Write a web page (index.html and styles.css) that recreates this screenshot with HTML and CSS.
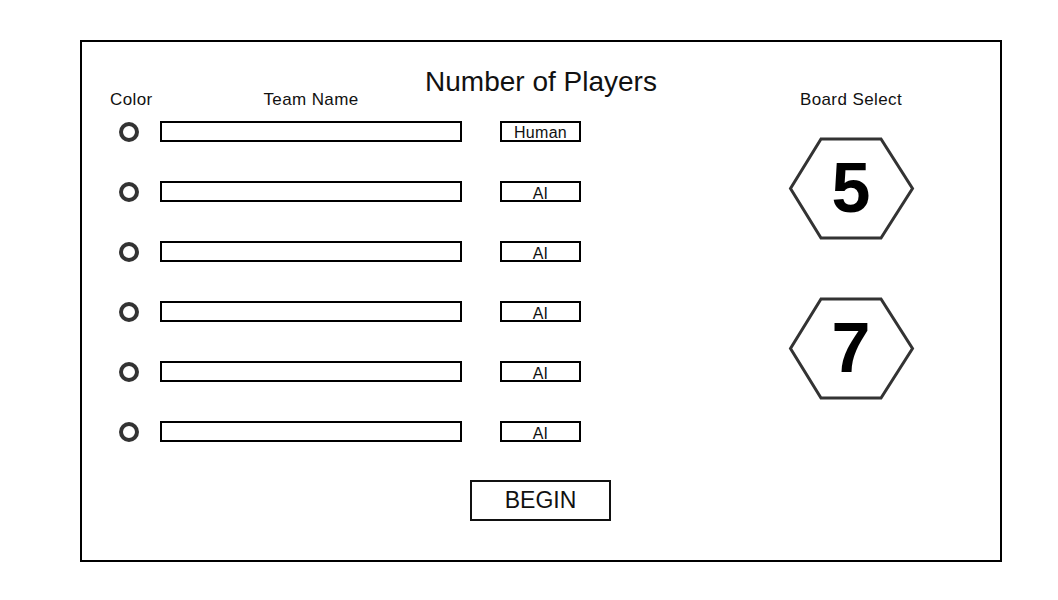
FILE: index.html
```html
<!DOCTYPE html>
<html lang="en">
<head>
    <meta charset="UTF-8">
    <meta name="viewport" content="width=device-width, initial-scale=1.0">
    <title>Game Setup</title>
    <link rel="stylesheet" href="styles.css">
</head>
<body>
    <div class="frame">
        <h1 class="title">Number of Players</h1>
        <div class="content">
            <div class="players">
                <div class="player-head">
                    <span class="label color-label">Color</span>
                    <span class="label name-label">Team Name</span>
                </div>
                <div class="player-list">
                    <div class="player-row">
                        <span class="swatch"></span>
                        <input class="team-name" type="text">
                        <span class="player-type">Human</span>
                    </div>
                    <div class="player-row">
                        <span class="swatch"></span>
                        <input class="team-name" type="text">
                        <span class="player-type ai">AI</span>
                    </div>
                    <div class="player-row">
                        <span class="swatch"></span>
                        <input class="team-name" type="text">
                        <span class="player-type ai">AI</span>
                    </div>
                    <div class="player-row">
                        <span class="swatch"></span>
                        <input class="team-name" type="text">
                        <span class="player-type ai">AI</span>
                    </div>
                    <div class="player-row">
                        <span class="swatch"></span>
                        <input class="team-name" type="text">
                        <span class="player-type ai">AI</span>
                    </div>
                    <div class="player-row">
                        <span class="swatch"></span>
                        <input class="team-name" type="text">
                        <span class="player-type ai">AI</span>
                    </div>
                </div>
                <div class="begin-row">
                    <button class="begin">BEGIN</button>
                </div>
            </div>
            <div class="board-select">
                <span class="label">Board Select</span>
                <button class="hex hex-first">
                    <svg width="128" height="106" viewBox="0 0 128 106">
                        <polygon points="34,3 94,3 125.5,52.5 94,102 34,102 3.5,52.5" />
                        <text x="64" y="76">5</text>
                    </svg>
                </button>
                <button class="hex">
                    <svg width="128" height="106" viewBox="0 0 128 106">
                        <polygon points="34,3 94,3 125.5,52.5 94,102 34,102 3.5,52.5" />
                        <text x="64" y="76">7</text>
                    </svg>
                </button>
            </div>
        </div>
    </div>
</body>
</html>
```

FILE: styles.css
```css
body {
    margin: 0;
    background-color: #fff;
    font-family: "Liberation Sans", Arial, sans-serif;
    color: #111;
}

.frame {
    box-sizing: border-box;
    width: 922px;
    height: 522px;
    margin: 40px 0 0 80px;
    padding-top: 28px;
    border: 2px solid #000;
}

.title {
    margin: 0 0 -4px;
    font-size: 28px;
    font-weight: normal;
    line-height: 24px;
    text-align: center;
}

.content {
    display: flex;
    align-items: flex-start;
}

.players {
    display: flex;
    flex-direction: column;
    padding-left: 28px;
}

.label {
    font-size: 17px;
    line-height: 20px;
    letter-spacing: 0.4px;
}

.player-head,
.player-row,
.begin-row {
    display: grid;
    grid-template-columns: 50px 340px 81px;
    align-items: center;
}

.name-label {
    width: 302px;
    text-align: center;
}

.player-list {
    display: flex;
    flex-direction: column;
    gap: 39px;
    margin-top: 10px;
}

.player-row {
    height: 21px;
}

.swatch {
    box-sizing: border-box;
    width: 20px;
    height: 20px;
    margin: 2px 0 0 9px;
    border: 4px solid #333;
    border-radius: 50%;
}

.team-name {
    box-sizing: border-box;
    width: 302px;
    height: 21px;
    margin: 0;
    padding: 0 4px;
    border: 2px solid #000;
    border-radius: 0;
    background: #fff;
}

.player-type {
    box-sizing: border-box;
    height: 21px;
    padding-top: 1px;
    border: 2px solid #000;
    font-size: 16px;
    line-height: 17px;
    letter-spacing: 0.3px;
    text-align: center;
}

.player-type.ai {
    padding-top: 2px;
}

.begin-row {
    margin-top: 39px;
}

.begin {
    grid-column: 3;
    justify-self: center;
    box-sizing: border-box;
    width: 141px;
    height: 41px;
    padding: 0;
    border: 2px solid #111;
    background: #fff;
    font-family: inherit;
    font-size: 23px;
    color: #111;
    cursor: pointer;
}

.board-select {
    display: flex;
    flex-direction: column;
    align-items: center;
    width: 140px;
    margin-left: 200px;
}

.hex {
    display: block;
    width: 128px;
    height: 106px;
    margin-top: 54px;
    padding: 0;
    border: none;
    background: none;
    cursor: pointer;
}

.hex-first {
    margin-top: 26px;
}

.hex svg {
    display: block;
}

.hex polygon {
    fill: #fff;
    stroke: #333;
    stroke-width: 3;
}

.hex text {
    font-family: "Liberation Sans", Arial, sans-serif;
    font-size: 70px;
    font-weight: bold;
    fill: #000;
    text-anchor: middle;
}
```
